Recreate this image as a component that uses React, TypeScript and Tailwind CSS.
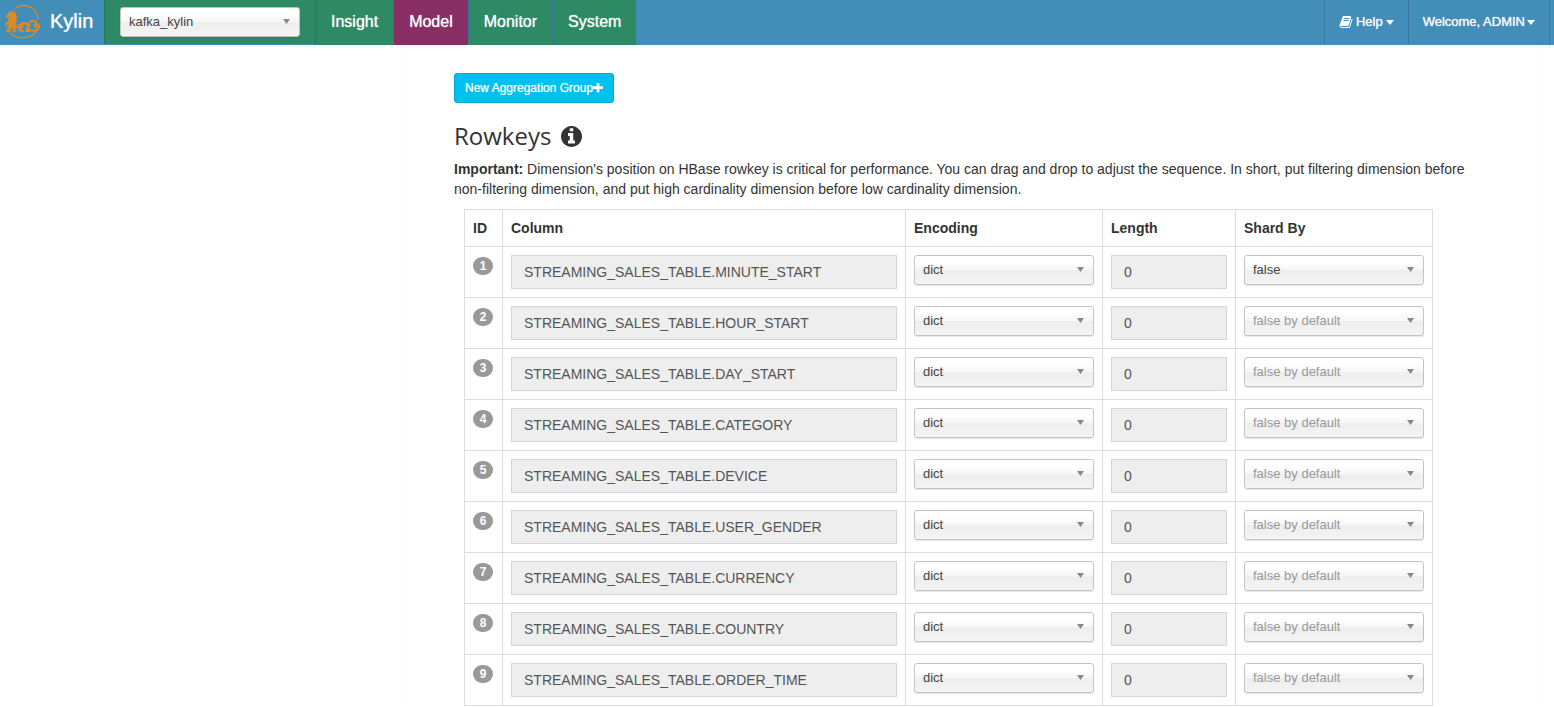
import clsx from "clsx";

const navItems = [
  { href: "#insight", label: "Insight" },
  { href: "#model", label: "Model", active: true },
  { href: "#monitor", label: "Monitor" },
  { href: "#system", label: "System" },
];

const rowkeys = [
  { column: "STREAMING_SALES_TABLE.MINUTE_START", shard: "false" },
  { column: "STREAMING_SALES_TABLE.HOUR_START", shard: "" },
  { column: "STREAMING_SALES_TABLE.DAY_START", shard: "" },
  { column: "STREAMING_SALES_TABLE.CATEGORY", shard: "" },
  { column: "STREAMING_SALES_TABLE.DEVICE", shard: "" },
  { column: "STREAMING_SALES_TABLE.USER_GENDER", shard: "" },
  { column: "STREAMING_SALES_TABLE.CURRENCY", shard: "" },
  { column: "STREAMING_SALES_TABLE.COUNTRY", shard: "" },
  { column: "STREAMING_SALES_TABLE.ORDER_TIME", shard: "" },
];

function Logo() {
  return (
    <svg viewBox="0 0 114 108" className="h-9 w-[38px]" fill="none" stroke="#d88b28" strokeLinecap="round" strokeLinejoin="round">
      <path d="M34 15C52 4 76 5 90 20c8 9 12 20 12 30" strokeWidth="4" />
      <path d="M20 90c14 16 38 18 58 10 8-3 14-8 18-14" strokeWidth="4" />
      <path
        d="M7 38l7-5 2-9 5 6 10-7-2 9 9 1-5 6 7 4-7 5 6 6-6 4 5 7-5 4 3 6-5 4 8 7H26l2-8-6-6-4 9 2 5H6l5-6 1-9 6-6-10-2-4 5 2-9 9-4-1-6 6-4-4-3-7 1z"
        fill="#d88b28"
        strokeWidth="3"
      />
      <path d="M40 72c6-2 8-10 16-11 10-2 17 3 17 10s-5 9-6 12h9" strokeWidth="8" />
      <path d="M56 70l-9 6 2 7h7" strokeWidth="7" />
      <path d="M74 80c14 6 30 3 31-9 1-8-9-11-13-5-2 4 1 7 5 5" strokeWidth="6" />
      <path d="M76 68c-2-10 6-16 14-14 5 1 7 4 5 7" strokeWidth="6" />
    </svg>
  );
}

function BookIcon() {
  return (
    <svg viewBox="0 0 1792 1792" className="size-[14px]" fill="currentColor">
      <path d="M1703 478q40 57 18 129l-275 906q-19 64-76.500 107.500t-122.500 43.500h-923q-77 0-148.500-53.500t-99.500-131.500q-24-67-2-127 0-4 3-27t4-37q1-8-3-21.500t-3-19.500q2-11 8-21t16.500-23.500 16.500-23.500q23-38 45-91.500t30-91.500q3-10 .5-30t-.5-28q3-11 17-28t17-23q21-36 42-92t25-90q1-9-2.500-32t.5-28q4-13 22-30.500t22-22.500q19-26 42.500-84.500t27.500-96.500q1-8-3-25.500t-2-26.500q2-8 9-18t18-23 17-21q8-12 16.500-30.500t15-35 16-36 19.500-32 26.500-23.500 36-11.500 47.500 5.500l-1 3q38-9 51-9h761q74 0 114 56t18 130l-274 906q-36 119-71.500 153.500t-128.500 34.500h-869q-27 0-38 15-11 16-1 43 24 70 144 70h923q29 0 56-15.500t35-41.500l300-987q7-22 5-57 38 15 59 43zm-1064 2q-4 13 2 22.500t20 9.500h608q13 0 25.500-9.500t16.500-22.500l21-64q4-13-2-22.500t-20-9.500h-608q-13 0-25.500 9.500t-16.500 22.500zm-83 256q-4 13 2 22.500t20 9.500h608q13 0 25.500-9.500t16.500-22.500l21-64q4-13-2-22.500t-20-9.500h-608q-13 0-25.500 9.500t-16.500 22.500z" />
    </svg>
  );
}

function PlusIcon() {
  return (
    <svg viewBox="192 192 1408 1408" className="size-[10px]" fill="currentColor">
      <path d="M1600 736v192q0 40-28 68t-68 28h-416v416q0 40-28 68t-68 28h-192q-40 0-68-28t-28-68v-416h-416q-40 0-68-28t-28-68v-192q0-40 28-68t68-28h416v-416q0-40 28-68t68-28h192q40 0 68 28t28 68v416h416q40 0 68 28t28 68z" />
    </svg>
  );
}

function InfoIcon() {
  return (
    <svg viewBox="128 128 1536 1536" className="size-[21px]" fill="currentColor">
      <path d="M1152 1376v-160q0-14-9-23t-23-9h-96v-512q0-14-9-23t-23-9h-320q-14 0-23 9t-9 23v160q0 14 9 23t23 9h96v320h-96q-14 0-23 9t-9 23v160q0 14 9 23t23 9h448q14 0 23-9t9-23zm-128-896v-160q0-14-9-23t-23-9h-192q-14 0-23 9t-9 23v160q0 14 9 23t23 9h192q14 0 23-9t9-23zm640 416q0 209-103 385.500t-279.500 279.500-385.500 103-385.500-103-279.500-279.500-103-385.500 103-385.500 279.500-279.500 385.500-103 385.500 103 279.500 279.500 103 385.500z" />
    </svg>
  );
}

function Caret() {
  return (
    <svg viewBox="0 0 8 5" className="h-[5px] w-2" fill="currentColor">
      <path d="M0 0h8L4 5z" />
    </svg>
  );
}

type ChosenProps = {
  label: string;
  value: string;
  options: string[];
  placeholder?: string;
};

function Chosen({ label, value, options, placeholder }: ChosenProps) {
  return (
    <div className="relative w-[180px]">
      <select
        aria-label={label}
        defaultValue={value}
        className={clsx(
          "block h-[30px] w-full appearance-none rounded-[3px] border border-[#c4c4c4] bg-[linear-gradient(#fff_20%,#f6f6f6_50%,#eee_52%,#f4f4f4_100%)] pr-6 pl-2 text-[13px] shadow-[0_1px_1px_rgba(0,0,0,0.1)]",
          value ? "text-[#444]" : "text-[#999]",
        )}
      >
        {placeholder && <option value="">{placeholder}</option>}
        {options.map((option) => (
          <option key={option}>{option}</option>
        ))}
      </select>
      <svg viewBox="0 0 7 5" className="pointer-events-none absolute top-3 right-[10px] h-[5px] w-[7px]" fill="#888">
        <path d="M0 0h7L3.500 5z" />
      </svg>
    </div>
  );
}

function Navbar() {
  const userButton =
    "flex items-center border-l border-[#3579a0] px-[14px] [text-shadow:0_0_1px_rgba(255,255,255,0.8)]";

  return (
    <header className="flex h-[45px] bg-[#438eb9] text-white">
      <a
        href="#home"
        className="flex w-[104px] items-center gap-2 pb-1 pl-1 text-xl [text-shadow:0_0_1px_rgba(255,255,255,0.8)]"
      >
        <Logo />
        Kylin
      </a>
      <div className="mb-px border-l border-[#2c7659] bg-[#2e8965] px-[15px] pt-[7px]">
        <Chosen label="Project" value="kafka_kylin" options={["kafka_kylin", "learn_kylin"]} />
      </div>
      <nav className="flex text-base [text-shadow:0_0_1px_rgba(255,255,255,0.8)]">
        {navItems.map((item) => (
          <a
            key={item.href}
            href={item.href}
            className={clsx(
              "border-l px-[15px] pt-[10px] leading-6",
              item.active ? "border-[#5b5f8e] bg-[#892e65]" : "border-[#3b7595] bg-[#2e8965] first:border-[#2c7659]",
            )}
          >
            {item.label}
          </a>
        ))}
      </nav>
      <div className="mr-1 ml-auto flex border-r border-[#3579a0] pb-px text-[13px]">
        <button className={clsx(userButton, "gap-[3px]")}>
          <BookIcon /> Help <Caret />
        </button>
        <button className={clsx(userButton, "gap-[2px]")}>
          Welcome, ADMIN <Caret />
        </button>
      </div>
    </header>
  );
}

function RowkeyTable() {
  const th = "border border-[#ddd] p-2 text-left font-bold";
  const td = "border border-[#ddd] p-2 align-top";
  const input = "block h-[34px] w-full border border-[#d2d4de] bg-[#eee] px-3 text-sm text-[#555]";

  return (
    <table className="w-full table-fixed border-collapse leading-5">
      <colgroup>
        <col className="w-[38px]" />
        <col />
        <col className="w-[197px]" />
        <col className="w-[133px]" />
        <col className="w-[197px]" />
      </colgroup>
      <thead>
        <tr>
          <th className={th}>ID</th>
          <th className={th}>Column</th>
          <th className={th}>Encoding</th>
          <th className={th}>Length</th>
          <th className={th}>Shard By</th>
        </tr>
      </thead>
      <tbody>
        {rowkeys.map((row, i) => (
          <tr key={row.column}>
            <td className={td}>
              <span className="mt-[2px] block h-[18px] w-5 rounded-[9px] bg-[#999] text-center text-xs leading-[18px] font-bold text-white">
                {i + 1}
              </span>
            </td>
            <td className={td}>
              <input aria-label={`Column ${i + 1}`} className={input} defaultValue={row.column} disabled />
            </td>
            <td className={td}>
              <Chosen label={`Encoding ${i + 1}`} value="dict" options={["dict", "fixed_length", "integer"]} />
            </td>
            <td className={td}>
              <input aria-label={`Length ${i + 1}`} className={input} defaultValue="0" disabled />
            </td>
            <td className={td}>
              <Chosen
                label={`Shard by ${i + 1}`}
                value={row.shard}
                options={["true", "false"]}
                placeholder="false by default"
              />
            </td>
          </tr>
        ))}
      </tbody>
    </table>
  );
}

export default function App() {
  return (
    <div className="bg-white font-['Liberation_Sans',Arial,sans-serif] text-sm text-[#333]">
      <Navbar />
      <div className="flex pr-4">
        <aside className="w-[401px] shrink-0" />
        <main className="min-w-0 flex-1 border-x border-[#f9f9f9] px-[52px] pt-7">
          <button className="flex h-[30px] items-center rounded-[3px] border border-[#00acd6] bg-[#00c0ef] px-[10px] text-xs text-white [text-shadow:0_0_1px_rgba(255,255,255,0.7)]">
            New Aggregation Group
            <PlusIcon />
          </button>
          <h3 className="mt-[15px] mb-[5px] flex items-center gap-[10px] font-['Open_Sans','Noto_Sans',sans-serif] text-2xl leading-9">
            Rowkeys <InfoIcon />
          </h3>
          <p className="leading-5">
            <b>Important:</b> Dimension's position on HBase rowkey is critical for performance. You can drag and drop to
            adjust the sequence. In short, put filtering dimension before non-filtering dimension, and put high
            cardinality dimension before low cardinality dimension.
          </p>
          <div className="mt-[10px] mr-[52px] ml-[10px]">
            <RowkeyTable />
          </div>
        </main>
      </div>
    </div>
  );
}
